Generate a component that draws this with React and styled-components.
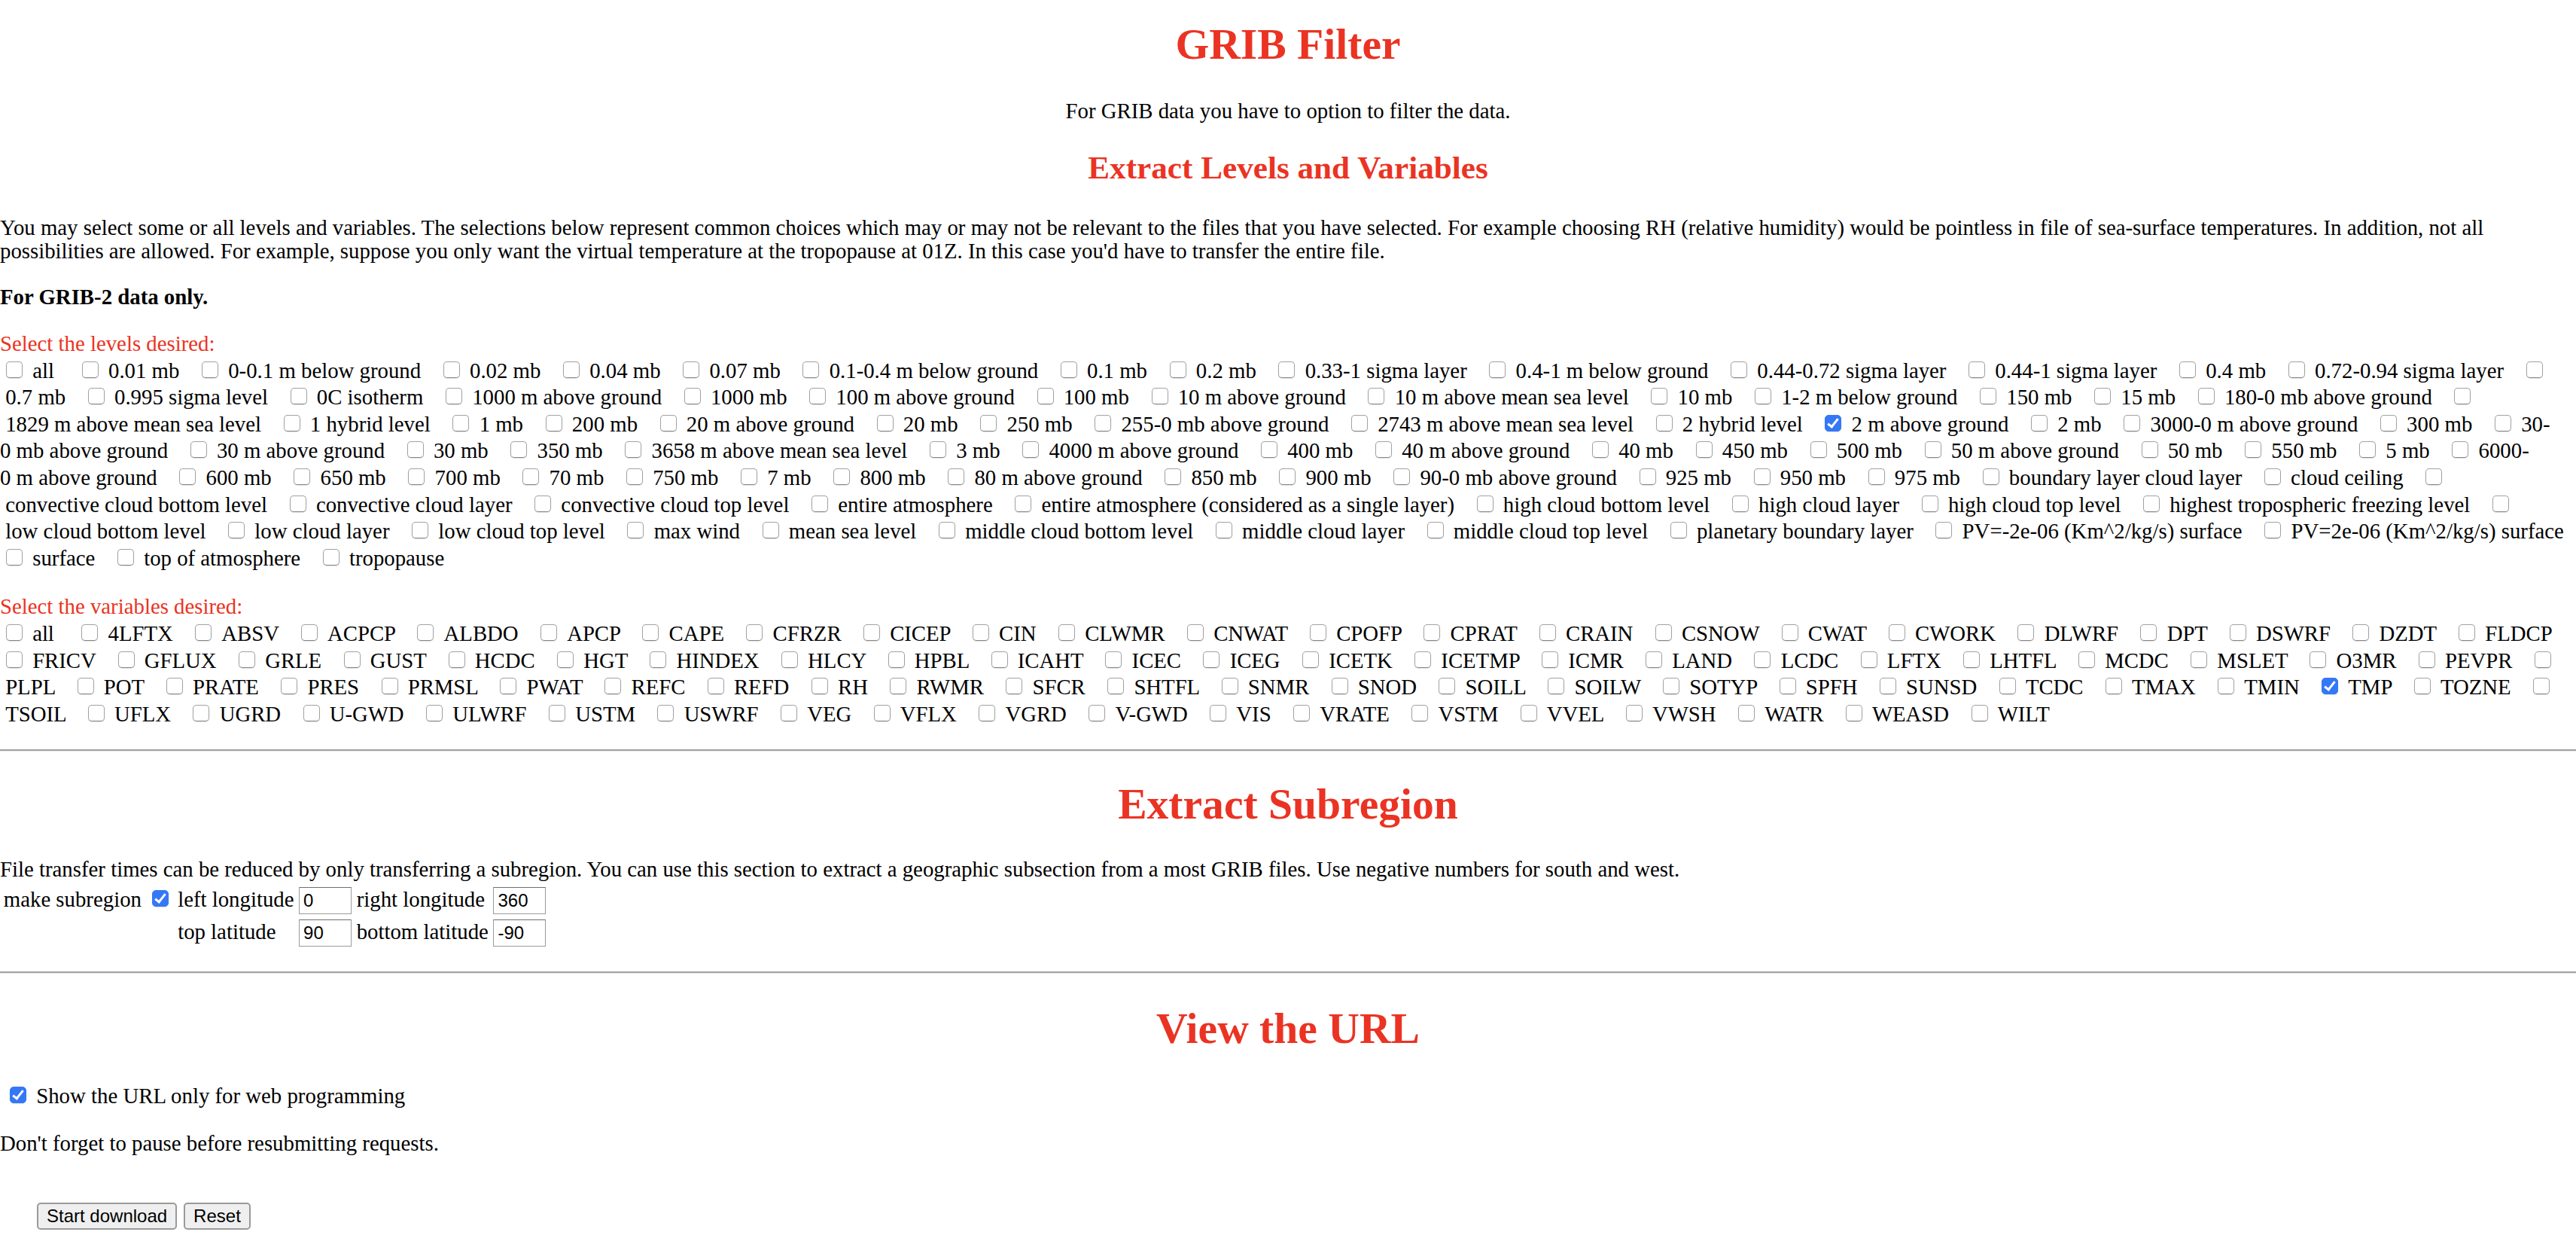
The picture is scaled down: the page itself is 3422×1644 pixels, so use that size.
import React, { Fragment } from "react";
import styled, { createGlobalStyle } from "styled-components";

const RED = "#eb3323";
const SERIF = `"Liberation Serif", "Times New Roman", Times, serif`;
const SANS = `"Liberation Sans", Arial, Helvetica, sans-serif`;

const LEVELS = [
    "all", "0.01 mb", "0-0.1 m below ground", "0.02 mb", "0.04 mb", "0.07 mb", "0.1-0.4 m below ground",
    "0.1 mb", "0.2 mb", "0.33-1 sigma layer", "0.4-1 m below ground", "0.44-0.72 sigma layer",
    "0.44-1 sigma layer", "0.4 mb", "0.72-0.94 sigma layer", "0.7 mb", "0.995 sigma level", "0C isotherm",
    "1000 m above ground", "1000 mb", "100 m above ground", "100 mb", "10 m above ground",
    "10 m above mean sea level", "10 mb", "1-2 m below ground", "150 mb", "15 mb", "180-0 mb above ground",
    "1829 m above mean sea level", "1 hybrid level", "1 mb", "200 mb", "20 m above ground", "20 mb", "250 mb",
    "255-0 mb above ground", "2743 m above mean sea level", "2 hybrid level", "2 m above ground", "2 mb",
    "3000-0 m above ground", "300 mb", "30-0 mb above ground", "30 m above ground", "30 mb", "350 mb",
    "3658 m above mean sea level", "3 mb", "4000 m above ground", "400 mb", "40 m above ground", "40 mb",
    "450 mb", "500 mb", "50 m above ground", "50 mb", "550 mb", "5 mb", "6000-0 m above ground", "600 mb",
    "650 mb", "700 mb", "70 mb", "750 mb", "7 mb", "800 mb", "80 m above ground", "850 mb", "900 mb",
    "90-0 mb above ground", "925 mb", "950 mb", "975 mb", "boundary layer cloud layer", "cloud ceiling",
    "convective cloud bottom level", "convective cloud layer", "convective cloud top level",
    "entire atmosphere", "entire atmosphere (considered as a single layer)", "high cloud bottom level",
    "high cloud layer", "high cloud top level", "highest tropospheric freezing level",
    "low cloud bottom level", "low cloud layer", "low cloud top level", "max wind", "mean sea level",
    "middle cloud bottom level", "middle cloud layer", "middle cloud top level", "planetary boundary layer",
    "PV=-2e-06 (Km^2/kg/s) surface", "PV=2e-06 (Km^2/kg/s) surface", "surface", "top of atmosphere",
    "tropopause",
];

const VARIABLES = [
    "all", "4LFTX", "ABSV", "ACPCP", "ALBDO", "APCP", "CAPE", "CFRZR", "CICEP", "CIN", "CLWMR", "CNWAT",
    "CPOFP", "CPRAT", "CRAIN", "CSNOW", "CWAT", "CWORK", "DLWRF", "DPT", "DSWRF", "DZDT", "FLDCP", "FRICV",
    "GFLUX", "GRLE", "GUST", "HCDC", "HGT", "HINDEX", "HLCY", "HPBL", "ICAHT", "ICEC", "ICEG", "ICETK",
    "ICETMP", "ICMR", "LAND", "LCDC", "LFTX", "LHTFL", "MCDC", "MSLET", "O3MR", "PEVPR", "PLPL", "POT",
    "PRATE", "PRES", "PRMSL", "PWAT", "REFC", "REFD", "RH", "RWMR", "SFCR", "SHTFL", "SNMR", "SNOD", "SOILL",
    "SOILW", "SOTYP", "SPFH", "SUNSD", "TCDC", "TMAX", "TMIN", "TMP", "TOZNE", "TSOIL", "UFLX", "UGRD",
    "U-GWD", "ULWRF", "USTM", "USWRF", "VEG", "VFLX", "VGRD", "V-GWD", "VIS", "VRATE", "VSTM", "VVEL",
    "VWSH", "WATR", "WEASD", "WILT",
];

const CHECKED = new Set(["2 m above ground", "TMP"]);

// labels keep their words together (nbsp) but may still wrap in a number range like "30-0"
const glue = (s) => s.replace(/ /g, "\u00a0").replace(/(\d)-(?=\d)/g, "$1-\u200b");

const GlobalStyle = createGlobalStyle`
    html, body {
        margin: 0;
        padding: 0;
        background: #fff;
        overflow: hidden;
    }
    body {
        font-family: ${SERIF};
        font-size: 28.8px;
        line-height: 31px;
        color: #000;
    }
`;

const Page = styled.form`
    display: flow-root;
    width: 3422px;
`;

const Title = styled.h1`
    margin: ${({$top}) => $top}px 0 0;
    font-size: 57.6px;
    line-height: 66px;
    font-weight: bold;
    color: ${RED};
    text-align: center;
`;

const SubTitle = styled.h2`
    margin: ${({$top}) => $top}px 0 0;
    font-size: 43.2px;
    line-height: 50px;
    font-weight: bold;
    color: ${RED};
    text-align: center;
`;

const Text = styled.p`
    margin: ${({$top}) => $top}px 0 0;
    text-align: ${({$center}) => $center ? "center" : "left"};
    font-weight: ${({$bold}) => $bold ? "bold" : "normal"};
`;

const ChoiceGroup = styled.div`
    margin-top: ${({$top}) => $top}px;
    line-height: 35.6px;
    letter-spacing: ${({$tracking}) => $tracking ?? 0}px;
`;

const GroupLabel = styled.span`
    color: ${RED};
    letter-spacing: 0;
`;

const Check = styled.input.attrs({type: "checkbox"})`
    appearance: none;
    position: relative;
    box-sizing: border-box;
    width: 22px;
    height: 22px;
    margin: 0 6px 0 ${({$left}) => $left ?? 8}px;
    vertical-align: baseline;
    border: 1.5px solid #a2a2a2;
    border-bottom-color: #858585;
    border-radius: 5px;
    background: #fff;
    box-shadow: 0 1px 1px rgba(0, 0, 0, 0.12);

    &:checked {
        background: #3478f6;
        border-color: #3478f6;
    }

    &:checked::after {
        content: "";
        position: absolute;
        left: 6px;
        top: 1px;
        width: 5px;
        height: 12px;
        border: solid #fff;
        border-width: 0 3px 3px 0;
        transform: rotate(38deg);
    }
`;

const Divider = styled.hr`
    margin: ${({$top}) => $top}px 0 0;
    height: 0;
    border: 0;
    border-top: 2px solid #a3a3a3;
    border-bottom: 1px solid #e8e8e8;
`;

const Region = styled.table`
    margin-top: 3px;
    border-spacing: 3.6px;
    border-collapse: separate;
`;

const Cell = styled.td`
    padding: 1.8px;
    vertical-align: baseline;
    white-space: nowrap;
`;

const Field = styled.input.attrs({type: "text"})`
    box-sizing: border-box;
    width: 70px;
    height: 36px;
    padding: 2px 5px;
    border: 1.5px solid #9b9b9b;
    border-top-color: #6f6f6f;
    border-radius: 0;
    font: 24px ${SANS};
    color: #000;
    background: #fff;
`;

const Actions = styled.div`
    display: flex;
    gap: 9px;
    margin-top: 63px;
    padding-left: 49px;
`;

const Button = styled.button`
    box-sizing: border-box;
    height: 36px;
    padding: 0 11px;
    font: 24px ${SANS};
    color: #000;
    background: #efefef;
    border: 2px solid #9a9a9a;
    border-radius: 5px;
`;

// box, a break point, the glued label, then spaces the line may break after
const Choices = ({items}) => items.map((label) => (
    <Fragment key={label}>
        <Check defaultChecked={CHECKED.has(label)}/>
        {"\u200b\u00a0"}{glue(label)}
        {label === "all" ? " \u00a0\u00a0 " : " \u00a0 "}
    </Fragment>
));

export default function App() {
    return (
        <>
            <GlobalStyle/>
            <Page onSubmit={(e) => e.preventDefault()}>
                <Title $top={26}>GRIB Filter</Title>
                <Text $top={40} $center>For GRIB data you have to option to filter the data.</Text>
                <SubTitle $top={35}>Extract Levels and Variables</SubTitle>
                <Text $top={39}>
                    You may select some or all levels and variables. The selections below represent common choices
                    which may or may not be relevant to the files that you have selected. For example choosing RH
                    (relative humidity) would be pointless in file of sea-surface temperatures. In addition, not all
                    possibilities are allowed. For example, suppose you only want the virtual temperature at the
                    tropopause at 01Z. In this case you'd have to transfer the entire file.
                </Text>
                <Text $top={30} $bold>For GRIB-2 data only.</Text>

                <ChoiceGroup $top={29}>
                    <GroupLabel>Select the levels desired:</GroupLabel>
                    <br/>
                    <Choices items={LEVELS}/>
                </ChoiceGroup>

                <ChoiceGroup $top={29} $tracking={-0.05}>
                    <GroupLabel>Select the variables desired:</GroupLabel>
                    <br/>
                    <Choices items={VARIABLES}/>
                </ChoiceGroup>

                <Divider $top={29}/>

                <Title $top={37}>Extract Subregion</Title>
                <Text $top={38}>
                    File transfer times can be reduced by only transferring a subregion. You can use this section to
                    extract a geographic subsection from a most GRIB files. Use negative numbers for south and west.
                </Text>
                <Region>
                    <tbody>
                        <tr>
                            <Cell>make subregion</Cell>
                            <Cell><Check $left={7} defaultChecked/></Cell>
                            <Cell>left longitude</Cell>
                            <Cell><Field defaultValue="0"/></Cell>
                            <Cell>right longitude</Cell>
                            <Cell><Field defaultValue="360"/></Cell>
                        </tr>
                        <tr>
                            <Cell/>
                            <Cell/>
                            <Cell>top latitude</Cell>
                            <Cell><Field defaultValue="90"/></Cell>
                            <Cell>bottom latitude</Cell>
                            <Cell><Field defaultValue="-90"/></Cell>
                        </tr>
                    </tbody>
                </Region>

                <Divider $top={28}/>

                <Title $top={40}>View the URL</Title>
                <ChoiceGroup $top={39}>
                    <Check $left={13} defaultChecked/>{" "}Show the URL only for web programming
                </ChoiceGroup>
                <Text $top={30}>Don't forget to pause before resubmitting requests.</Text>

                <Actions>
                    <Button type="submit">Start download</Button>
                    <Button type="reset">Reset</Button>
                </Actions>
            </Page>
        </>
    );
}
